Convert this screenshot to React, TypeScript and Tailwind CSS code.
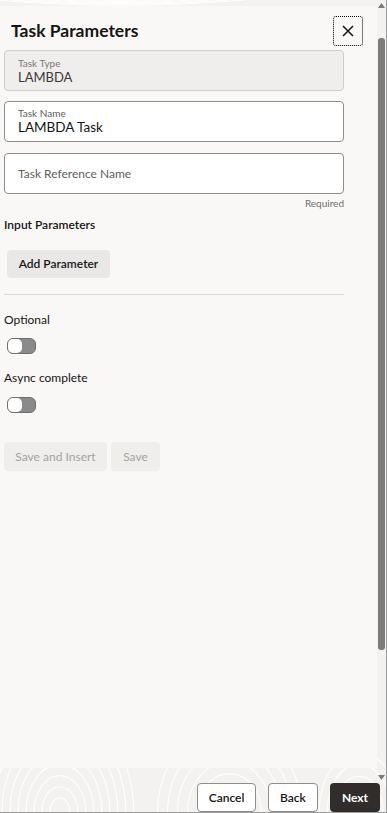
import React from 'react';

const font = { fontFamily: 'Lato, "Noto Sans", sans-serif' };

const Toggle: React.FC = () => (
  <div className="relative h-[16px] w-[29px] rounded-[6px] border border-[#6f6f6f] bg-[#8a8a8a]">
    <div className="absolute left-0 top-0 h-[14px] w-[14px] rounded-[5px] bg-white" />
  </div>
);

const Pattern: React.FC = () => (
  <svg className="absolute inset-0 h-full w-full" viewBox="0 0 387 813" preserveAspectRatio="none">
    <rect width="387" height="813" fill="#f3f2f0" />
    <g fill="none" stroke="#ffffff" strokeWidth="1.2" opacity="0.9">
      {[10, 18, 26, 34, 42, 50, 58, 66, 74].map((r) => (
        <path key={'a' + r} d={`M ${60 - r} 813 A ${r} ${r * 1.4} 0 0 1 ${60 + r} 813`} />
      ))}
      {[12, 22, 32, 42, 52, 62, 72].map((r) => (
        <path key={'b' + r} d={`M ${230 - r} 813 A ${r} ${r * 1.2} 0 0 1 ${230 + r} 813`} />
      ))}
      {[8, 16, 24, 32, 40].map((r) => (
        <path key={'c' + r} d={`M ${360 - r} 813 A ${r} ${r * 1.5} 0 0 1 ${360 + r} 813`} />
      ))}
      {[6, 12, 18, 24, 30, 36, 42].map((r) => (
        <path key={'d' + r} d={`M ${120 - r * 3} 0 Q 120 ${r / 4} ${120 + r * 3} 0`} />
      ))}
    </g>
  </svg>
);

export default function App() {
  return (
    <div
      className="relative h-[813px] w-[387px] overflow-hidden border-b border-r border-[#9c9c9c] text-[#161513]"
      style={font}
    >
      <Pattern />
      <div className="relative flex h-full flex-col">
        <div className="flex h-[783px]">
          <div className="w-[377px] pt-[6px]">
            <div className="h-[762px] bg-[#f9f8f6] pl-[4px] pr-[33px]">
              <div className="flex items-center justify-between pt-[9px]">
                <h1 className="pl-[7px] text-[17.5px] font-bold leading-[32px]">Task Parameters</h1>
                <button className="mr-[-19px] flex h-[30px] w-[30px] items-center justify-center rounded-[3px] border border-dotted border-black">
                  <svg width="12" height="12" viewBox="0 0 12 12" stroke="#161513" strokeWidth="1.5">
                    <path d="M1 1 L11 11 M11 1 L1 11" />
                  </svg>
                </button>
              </div>

              <div className="mt-[3px] flex h-[41px] flex-col justify-center rounded-[4px] border border-[#cfcdca] bg-[#efeeec] px-[13px]">
                <span className="text-[10px] leading-[12px] text-[#7a7875]">Task Type</span>
                <span className="text-[13px] leading-[16px] text-[#3a3836]">LAMBDA</span>
              </div>

              <div className="mt-[10px] flex h-[41px] flex-col justify-center rounded-[4px] border border-[#8f8d8a] bg-white px-[13px]">
                <span className="text-[10px] leading-[12px] text-[#5f5d5a]">Task Name</span>
                <span className="text-[13.5px] leading-[17px]">LAMBDA Task</span>
              </div>

              <div className="mt-[11px] flex h-[41px] items-center rounded-[4px] border border-[#8f8d8a] bg-white px-[13px]">
                <span className="text-[12px] text-[#5f5d5a]">Task Reference Name</span>
              </div>
              <div className="mt-[2px] text-right text-[10px] leading-[14px] text-[#6f6d6a]">Required</div>

              <div className="mt-[7px] text-[12px] font-semibold leading-[16px]">Input Parameters</div>

              <button className="ml-[3px] mt-[17px] h-[28px] w-[103px] rounded-[4px] bg-[#e9e8e6] text-[12px] font-semibold">
                Add Parameter
              </button>

              <div className="mt-[16px] h-px bg-[#dcdad7]" />

              <div className="mt-[17px] text-[12px] leading-[16px]">Optional</div>
              <div className="ml-[3px] mt-[10px]"><Toggle /></div>

              <div className="mt-[16px] text-[12px] leading-[16px]">Async complete</div>
              <div className="ml-[3px] mt-[11px]"><Toggle /></div>

              <div className="mt-[29px] flex gap-[4px]">
                <button className="h-[29px] w-[103px] rounded-[4px] bg-[#efeeec] text-[12px] text-[#a4a29f]">Save and Insert</button>
                <button className="h-[29px] w-[49px] rounded-[4px] bg-[#efeeec] text-[12px] text-[#a4a29f]">Save</button>
              </div>
            </div>
          </div>

          <div className="flex w-[9px] flex-col items-center">
            <svg width="7" height="5" viewBox="0 0 7 5" className="mt-[3px]">
              <path d="M0 5 L3.5 0 L7 5 Z" fill="#7a7a7a" />
            </svg>
            <div className="mt-[30px] h-[612px] w-[7px] rounded-[3px] bg-[#7c7c7c]" />
            <div className="flex-1" />
            <svg width="7" height="5" viewBox="0 0 7 5" className="mb-[3px]">
              <path d="M0 0 L7 0 L3.5 5 Z" fill="#7a7a7a" />
            </svg>
          </div>
        </div>

        <div className="flex justify-end gap-[12px] pr-[6px]">
          <button className="h-[29px] w-[59px] rounded-[4px] border border-[#8f8d8a] bg-white text-[12px] font-semibold">Cancel</button>
          <button className="h-[29px] w-[50px] rounded-[4px] border border-[#8f8d8a] bg-white text-[12px] font-semibold">Back</button>
          <button className="h-[29px] w-[50px] rounded-[4px] bg-[#312d2a] text-[12px] font-bold text-white">Next</button>
        </div>
      </div>
    </div>
  );
}
